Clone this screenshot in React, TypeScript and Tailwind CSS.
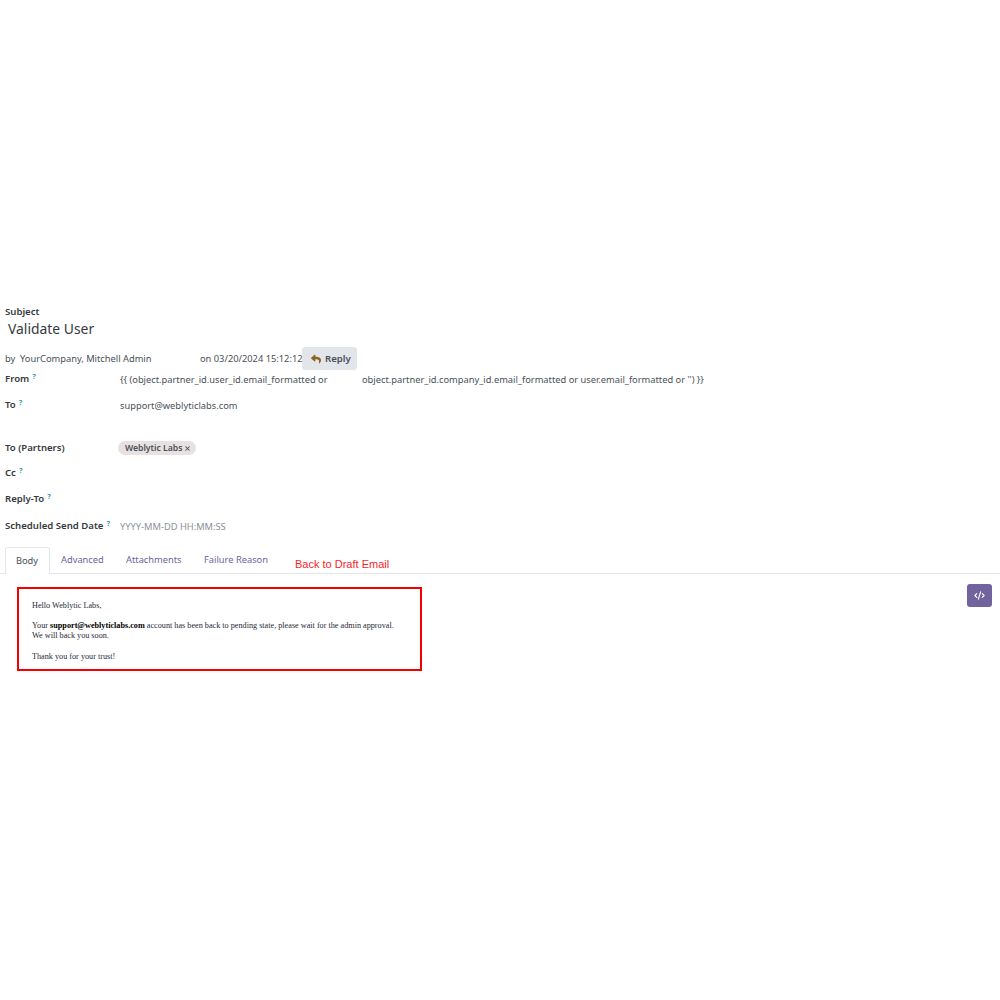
import { CodeXml, X } from "lucide-react";
import { FaReply } from "react-icons/fa";

function Hint() {
  return <sup className="text-[7.5px] font-bold text-[#3f9bb0] ml-[3px] -top-[3px]">?</sup>;
}

function Field({ label, hint, className, children }: { label: string; hint?: boolean; className: string; children?: React.ReactNode }) {
  return (
    <div className={`flex ${className}`}>
      <div className="w-[120px] shrink-0 pl-[5px] -mt-[1px] text-[9.6px] font-semibold text-[#343a40]">
        {label}
        {hint && <Hint />}
      </div>
      {children}
    </div>
  );
}

function App() {
  return (
    <div className="h-[1000px] bg-white pt-[305px] font-['Noto_Sans',sans-serif] text-[9.3px] leading-[14px] text-[#495057]">
      <div className="pl-[5px] h-[14px] text-[9.6px] font-semibold text-[#343a40]">Subject</div>
      <div className="pl-[8px] h-[20px] text-[13.9px] leading-[20px] text-[#343a40]">Validate User</div>

      <div className="flex items-center h-[23px] mt-[8px] pl-[5px] whitespace-nowrap">
        <span className="w-[15px]">by</span>
        <span className="w-[180px]">YourCompany, Mitchell Admin</span>
        <span className="w-[102px]">on 03/20/2024 15:12:12</span>
        <button className="flex items-center gap-[4px] h-[23px] w-[55px] pl-[9px] rounded-[3px] bg-[#e2e5e9] text-[9.6px] font-semibold text-[#495057]">
          <FaReply size={10} className="text-[#8a6420]" />
          Reply
        </button>
      </div>

      <Field label="From" hint className="h-[26px] mt-[2px] pt-[1px]">
        <span className="w-[242px] whitespace-nowrap">{"{{ (object.partner_id.user_id.email_formatted or"}</span>
        <span className="whitespace-nowrap">{"object.partner_id.company_id.email_formatted or user.email_formatted or '') }}"}</span>
      </Field>
      <Field label="To" hint className="h-[43px] pt-[1px]">
        <span>support@weblyticlabs.com</span>
      </Field>
      <Field label="To (Partners)" className="h-[25px] pt-[1px]">
        <span className="flex items-center gap-[2px] h-[14px] ml-[-2px] -mt-[1px] pl-[7px] pr-[5px] rounded-full bg-[#e7e1e1] text-[8.6px] font-semibold whitespace-nowrap">
          Weblytic Labs
          <X size={7} strokeWidth={3.5} />
        </span>
      </Field>
      <Field label="Cc" hint className="h-[26px] pt-[1px]" />
      <Field label="Reply-To" hint className="h-[27px] pt-[1px]" />
      <Field label="Scheduled Send Date" hint className="h-[21px] pt-[1px]">
        <span className="text-[#8a9099]">YYYY-MM-DD HH:MM:SS</span>
      </Field>

      <div className="flex items-end h-[27px] mt-[7px] border-b border-[#e5e7eb] pl-[5px]">
        <div className="flex items-center justify-center h-[27px] w-[45px] mb-[-1px] pr-[1px] border border-b-0 border-[#e5e7eb] rounded-t-[3px] bg-white">Body</div>
        <div className="flex items-center h-[26px] pl-[11px] w-[65px] text-[#71639e]">Advanced</div>
        <div className="flex items-center h-[26px] pl-[11px] w-[78px] text-[#71639e]">Attachments</div>
        <div className="flex items-center h-[26px] pl-[11px] w-[102px] text-[#71639e]">Failure Reason</div>
        <div className="flex items-center h-[26px] pt-[7px] font-['Liberation_Sans',sans-serif] text-[11px] text-[#f5262b]">Back to Draft Email</div>
      </div>

      <div className="flex justify-between items-start pt-[13px] pl-[17px] pr-[8px]">
        <div className="w-[405px] h-[84px] border-2 border-[#f40000] pl-[13px] pt-[12px] font-['Liberation_Serif',serif] text-[8.2px] leading-[10.5px] text-[#1f2937]">
          <p>Hello Weblytic Labs,</p>
          <p className="mt-[9px]">
            Your <b className="text-black">support@weblyticlabs.com</b> account has been back to pending state, please wait for the admin approval.
          </p>
          <p>We will back you soon.</p>
          <p className="mt-[10px]">Thank you for your trust!</p>
        </div>
        <button className="flex items-center justify-center w-[25px] h-[23px] -mt-[3px] rounded-[3px] bg-[#71639e] text-white">
          <CodeXml size={11} strokeWidth={2.5} />
        </button>
      </div>
    </div>
  );
}

export default App;
